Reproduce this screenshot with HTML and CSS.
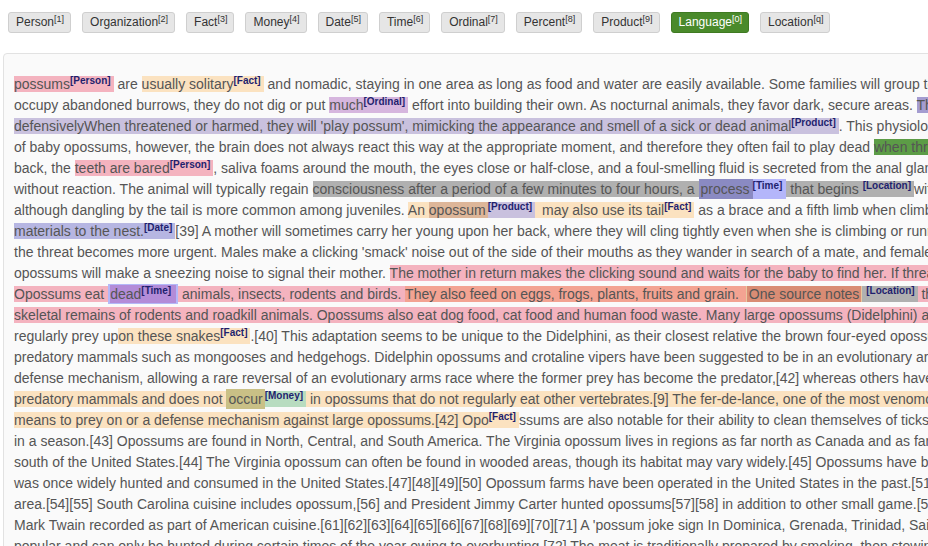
FILE: index.html
```html
<!DOCTYPE html>
<html>
<head>
<meta charset="utf-8">
<link rel="stylesheet" href="styles.css">
</head>
<body>
<div class="toolbar">
  <button class="btn">Person<sup>[1]</sup></button>
  <button class="btn">Organization<sup>[2]</sup></button>
  <button class="btn">Fact<sup>[3]</sup></button>
  <button class="btn">Money<sup>[4]</sup></button>
  <button class="btn">Date<sup>[5]</sup></button>
  <button class="btn">Time<sup>[6]</sup></button>
  <button class="btn">Ordinal<sup>[7]</sup></button>
  <button class="btn">Percent<sup>[8]</sup></button>
  <button class="btn">Product<sup>[9]</sup></button>
  <button class="btn active">Language<sup>[0]</sup></button>
  <button class="btn">Location<sup>[q]</sup></button>
</div>
<div class="doc">
  <div class="ln"><span class="e person">possums<sup class="tag">[Person]</sup></span> are <span class="e fact">usually solitary<sup class="tag">[Fact]</sup></span> and nomadic, staying in one area as long as food and water are easily available. Some families will group together in ready-made shelters or burrows.</div>
  <div class="ln">occupy abandoned burrows, they do not dig or put <span class="e ordinal">much<sup class="tag">[Ordinal]</sup></span> effort into building their own. As nocturnal animals, they favor dark, secure areas. <span class="e product2">They</span> behave defensively</div>
  <div class="ln"><span class="e product">defensivelyWhen threatened or harmed, they will 'play possum', mimicking the appearance and smell of a sick or dead animal<sup class="tag">[Product]</sup></span>. This physiological response is involuntary</div>
  <div class="ln">of baby opossums, however, the brain does not always react this way at the appropriate moment, and therefore they often fail to play dead <span class="e lang">when threatened by predators</span></div>
  <div class="ln">back, the <span class="e person">teeth are bared<sup class="tag">[Person]</sup></span>, saliva foams around the mouth, the eyes close or half-close, and a foul-smelling fluid is secreted from the anal glands.</div>
  <div class="ln">without reaction. The animal will typically regain <span class="e location">consciousness after a period of a few minutes to four hours, a <span class="e time"><span class="time-in">process</span><sup class="tag">[Time]</sup></span> that begins <sup class="tag">[Location]</sup></span>with slight twitching of the ears.</div>
  <div class="ln">although dangling by the tail is more common among juveniles. <span class="e fact">An <span class="e product pw"><span class="tan">opossum</span><sup class="tag">[Product]</sup></span></span><span class="e fact"> may also use its tail<sup class="tag">[Fact]</sup></span> as a brace and a fifth limb when climbing. The tail is occasionally</div>
  <div class="ln"><span class="e date">materials to the nest.<sup class="tag">[Date]</sup></span>[39] A mother will sometimes carry her young upon her back, where they will cling tightly even when she is climbing or running.</div>
  <div class="ln">the threat becomes more urgent. Males make a clicking 'smack' noise out of the side of their mouths as they wander in search of a mate, and females</div>
  <div class="ln">opossums will make a sneezing noise to signal their mother. <span class="e person">The mother in return makes the clicking sound and waits for the baby to find her. If threatened</span></div>
  <div class="ln"><span class="e person">Opossums eat <span class="e dead"><span class="dead-in">dead<sup class="tag">[Time]</sup></span></span> animals, insects, rodents and birds. <span class="e salmon">They also feed on eggs, frogs, plants, fruits and grain. </span> <span class="e source">One source notes</span><span class="e loc-lbl"> <sup class="tag">[Location]</sup></span> their importance</span></div>
  <div class="ln"><span class="e person">skeletal remains of rodents and roadkill animals. Opossums also eat dog food, cat food and human food waste. Many large opossums (Didelphini) are</span></div>
  <div class="ln">regularly prey up<span class="e fact">on these snakes<sup class="tag">[Fact]</sup></span>.[40] This adaptation seems to be unique to the Didelphini, as their closest relative the brown four-eyed opossum</div>
  <div class="ln">predatory mammals such as mongooses and hedgehogs. Didelphin opossums and crotaline vipers have been suggested to be in an evolutionary arms race</div>
  <div class="ln">defense mechanism, allowing a rare reversal of an evolutionary arms race where the former prey has become the predator,[42] whereas others have</div>
  <div class="ln"><span class="e fact">predatory mammals and does not <span class="e money"><span class="occur">occur</span><sup class="tag">[Money]</sup></span> in opossums that do not regularly eat other vertebrates.[9] The fer-de-lance, one of the most venomous</span></div>
  <div class="ln"><span class="e fact">means to prey on or a defense mechanism against large opossums.[42] Opo<sup class="tag">[Fact]</sup></span>ssums are also notable for their ability to clean themselves of ticks,</div>
  <div class="ln">in a season.[43] Opossums are found in North, Central, and South America. The Virginia opossum lives in regions as far north as Canada and as far</div>
  <div class="ln">south of the United States.[44] The Virginia opossum can often be found in wooded areas, though its habitat may vary widely.[45] Opossums have been</div>
  <div class="ln">was once widely hunted and consumed in the United States.[47][48][49][50] Opossum farms have been operated in the United States in the past.[51][52]</div>
  <div class="ln">area.[54][55] South Carolina cuisine includes opossum,[56] and President Jimmy Carter hunted opossums[57][58] in addition to other small game.[59]</div>
  <div class="ln">Mark Twain recorded as part of American cuisine.[61][62][63][64][65][66][67][68][69][70][71] A 'possum joke sign In Dominica, Grenada, Trinidad, Saint Lucia</div>
  <div class="ln">popular and can only be hunted during certain times of the year owing to overhunting.[72] The meat is traditionally prepared by smoking, then stewing</div>
</div>
</body>
</html>
```
FILE: styles.css
```css
html, body {
  margin: 0;
  padding: 0;
  overflow: hidden;
  background: #ffffff;
}
body {
  font-family: "Liberation Sans", Arial, sans-serif;
}
.toolbar {
  display: flex;
  gap: 11px;
  padding: 12px 8px 0 8px;
  height: 21px;
}
.btn {
  font-family: "Liberation Sans", Arial, sans-serif;
  font-size: 12px;
  color: #333;
  background: #e6e6e6;
  border: 1px solid #cfcfcf;
  border-radius: 3px;
  height: 21px;
  padding: 0 6px 0 7px;
  line-height: 19px;
  margin: 0;
  white-space: nowrap;
}
.btn sup {
  font-size: 9px;
  line-height: 0;
  vertical-align: 4px;
}
.btn.active {
  background: #4a8a2b;
  border-color: #3f7a22;
  color: #fff;
}
.doc {
  margin: 20px 0 0 3px;
  width: 1400px;
  border: 1px solid #e2e2e2;
  border-radius: 4px;
  background: #fafafa;
  padding: 20px 10px 20px 10px;
  color: #555;
  font-size: 14px;
  line-height: 21px;
}
.ln {
  white-space: nowrap;
  height: 21px;
}
.e {
  padding-right: 3px;
}
.tag {
  font-size: 10px;
  font-weight: bold;
  color: #1f1f6e;
  line-height: 0;
  vertical-align: 5px;
}
.person { background: #f4b3bf; }
.fact { background: #fbe2c0; }
.ordinal { background: #d6b6de; }
.product { background: #c9c1de; }
.product2 { background: #a49cd0; padding-right: 0; }
.date { background: #b6b6e2; }
.lang { background: #5c9c46; padding-right: 0; }
.location { background: #b0b0b0; }
.time { background: #b4b6fa; padding: 2px 4px 2px 0; }
.time-in { background: #8a8ac2; padding: 2px 3px 2px 2px; }
.pw { padding-right: 3px; }
.tan { background: #ddb699; padding-right: 2px; }
.dead { background: #b4b8f8; padding: 2px 2px; }
.dead-in { background: #b38cd8; padding: 1px 5px 1px 0; }
.salmon { background: #f3a392; }
.source { background: #d98c74; padding: 0 2px; border-left: 1px solid #e8c8a0; border-right: 1px solid #e8c8a0; }
.loc-lbl { background: #b0b0b0; padding: 0 3px 0 0; }
.money { background: #b8dcc0; padding-right: 3px; }
.occur { background: #c9c086; padding: 2px 2px; }
```
